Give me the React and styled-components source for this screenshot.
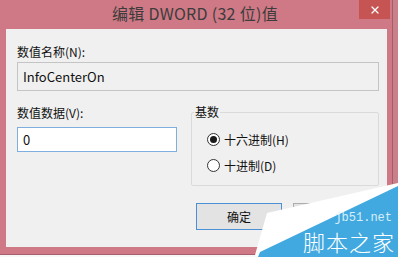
import React from 'react';
import styled, { createGlobalStyle } from 'styled-components';
import { X } from 'lucide-react';

const GlobalStyle = createGlobalStyle`
    html, body {
        margin: 0;
        padding: 0;
        background: #f4f4f4;
    }
    * {
        box-sizing: border-box;
    }
`;

const font = `"Noto Sans CJK SC", "Noto Sans", sans-serif`;

const Page = styled.div`
    position: relative;
    width: 398px;
    height: 257px;
    overflow: hidden;
    font-family: ${font};
    font-size: 12px;
    color: #111;
`;

const Desk = styled.div`
    display: flex;
    background: #c9808b;
`;

const Window = styled.div`
    display: flex;
    flex-direction: column;
    width: 393px;
    height: 255px;
    background: #ce7985;
    border-right: 1px solid #a55f6a;
    border-bottom: 1px solid #a85e6a;
    padding-bottom: 7px;
`;

const TitleBar = styled.div`
    display: grid;
    grid-template-columns: 1fr auto 1fr;
    height: 29px;
    padding-right: 2px;

    .title {
        grid-column: 2;
        align-self: center;
        margin-top: -3px;
        font-size: 16px;
        color: #3c3c3c;
        letter-spacing: 0.3px;
    }
`;

const CloseButton = styled.div`
    grid-column: 3;
    justify-self: end;
    display: flex;
    align-items: center;
    justify-content: center;
    width: 31px;
    height: 19px;
    background: #c65453;
    color: #fff;
`;

const Client = styled.div`
    flex: 1;
    display: flex;
    flex-direction: column;
    margin: 0 5px 0 6px;
    padding: 15px 8px 0 11px;
    background: #f0f0f0;
`;

const Label = styled.div`
    line-height: 16px;
    height: 16px;
    margin-bottom: ${p => p.gap || 2}px;
`;

const TextBox = styled.div`
    display: flex;
    align-items: center;
    width: ${p => p.width || '100%'};
    height: ${p => p.height}px;
    padding-left: 5px;
    font-size: 13px;
    background: ${p => (p.readOnly ? '#f0f0f0' : '#ffffff')};
    border: 1px solid ${p => (p.readOnly ? '#c4c4c4' : '#7eaedf')};
    color: #111;
`;

const Row = styled.div`
    display: flex;
    gap: 14px;
    margin-top: 13px;
`;

const Column = styled.div`
    display: flex;
    flex-direction: column;
    padding-top: 1px;
`;

const GroupBox = styled.fieldset`
    flex: 1;
    margin: 0;
    padding: 0 0 11px 2px;
    border: 1px solid #dadada;
    border-radius: 2px;

    legend {
        padding: 0 1px;
        line-height: 16px;
        font-size: 12px;
    }
`;

const RadioList = styled.div`
    display: flex;
    flex-direction: column;
    gap: 8px;
    padding: 10px 0 0 13px;
`;

const RadioRow = styled.label`
    display: flex;
    align-items: center;
    gap: 4px;
    height: 18px;
`;

const RadioCircle = styled.span`
    display: flex;
    align-items: center;
    justify-content: center;
    width: 13px;
    height: 13px;
    border-radius: 50%;
    border: 1px solid #333;
    background: #fff;

    &::after {
        content: '';
        display: ${p => (p.checked ? 'block' : 'none')};
        width: 7px;
        height: 7px;
        border-radius: 50%;
        background: #1a1a1a;
    }
`;

const ButtonBar = styled.div`
    display: flex;
    justify-content: flex-end;
    gap: 11px;
    margin-top: 17px;
`;

const Button = styled.div`
    display: flex;
    align-items: center;
    justify-content: center;
    width: 86px;
    height: 27px;
    background: #e3e3e3;
    border: 1px solid ${p => (p.primary ? '#4b90d4' : '#adadad')};
`;

const BottomStrip = styled.div`
    height: 2px;
    background: #f7f7f7;
`;

const Watermark = styled.div`
    position: absolute;
    right: 0;
    bottom: 0;
    width: 148px;
    height: 75px;

    svg {
        position: absolute;
        inset: 0;
    }

    .site {
        position: absolute;
        right: 6px;
        top: 30px;
        font-family: "Liberation Mono", "DejaVu Sans Mono", monospace;
        font-size: 12px;
        line-height: 12px;
        color: #d8eef9;
    }

    .brand {
        position: absolute;
        right: 3px;
        top: 47px;
        font-family: ${font};
        font-weight: 300;
        font-size: 22px;
        line-height: 24px;
        letter-spacing: 1px;
        color: #ffffff;
    }
`;

export default function App() {
    return (
        <Page>
            <GlobalStyle />
            <Desk>
                <Window>
                    <TitleBar>
                        <div className="title">编辑 DWORD (32 位)值</div>
                        <CloseButton>
                            <X size={12} strokeWidth={2.6} />
                        </CloseButton>
                    </TitleBar>
                    <Client>
                        <Label>数值名称(N):</Label>
                        <TextBox readOnly height={29}>InfoCenterOn</TextBox>
                        <Row>
                            <Column>
                                <Label gap={6}>数值数据(V):</Label>
                                <TextBox width="160px" height={25}>0</TextBox>
                            </Column>
                            <GroupBox>
                                <legend>基数</legend>
                                <RadioList>
                                    <RadioRow>
                                        <RadioCircle checked />
                                        十六进制(H)
                                    </RadioRow>
                                    <RadioRow>
                                        <RadioCircle />
                                        十进制(D)
                                    </RadioRow>
                                </RadioList>
                            </GroupBox>
                        </Row>
                        <ButtonBar>
                            <Button primary>确定</Button>
                            <Button />
                        </ButtonBar>
                    </Client>
                </Window>
            </Desk>
            <BottomStrip />

            <Watermark>
                <svg width="148" height="75" viewBox="0 0 148 75">
                    <polygon points="5,73 17,31 148,1 148,75 8,75" fill="#ffffff" />
                    <polygon points="8,75 10,70 148,4 148,75" fill="#41a9df" />
                </svg>
                <span className="site">jb51.net</span>
                <span className="brand">脚本之家</span>
            </Watermark>
        </Page>
    );
}
